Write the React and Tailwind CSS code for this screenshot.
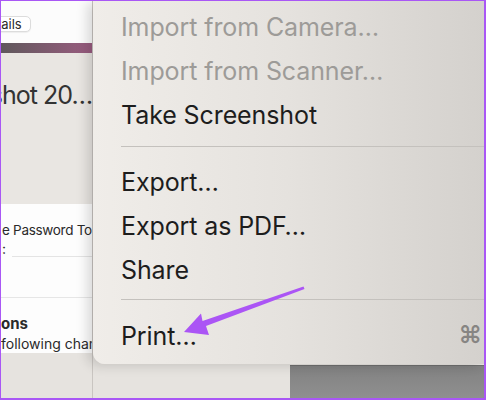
import React from 'react';

const font = { fontFamily: 'Inter, "Noto Sans", sans-serif' };

function Item({ label, disabled, shortcut }) {
  return (
    <div
      className={`flex items-center justify-between h-[44px] pl-[28px] pr-[2px] text-[25px] leading-[44px] whitespace-nowrap tracking-[-0.1px] ${
        disabled ? 'text-[#9d9b98]' : 'text-[#1d1d1d]'
      }`}
    >
      <span className="pt-[3px]">{label}</span>
      {shortcut && <span className="text-[#878583] text-[24px] font-semibold pt-[1px]">{shortcut}</span>}
    </div>
  );
}

function Separator({ top, bottom }) {
  return (
    <div className={`${top} ${bottom} pl-[28px]`}>
      <div className="h-px bg-[#c4c1bd]" />
    </div>
  );
}

function LeftWindow() {
  return (
    <div className="w-[92px] h-full flex flex-col shrink-0 overflow-hidden border-r border-[#c9c5c1] text-[#2a2a2a]">
      <div className="h-[42px] bg-[#fcfcfc] flex items-start pt-[15px]">
        <div className="ml-[-30px] h-[16px] px-[8px] flex items-center rounded-[5px] border border-[#dcdcdc] bg-white text-[13px] leading-none shadow-[0_1px_1px_rgba(0,0,0,0.06)]">
          Details
        </div>
      </div>
      <div className="h-[10px] bg-gradient-to-r from-[#5f585c] via-[#7d5a6e] to-[#9a5c80]" />
      <div className="h-[151px] bg-[#e9e6e2] flex justify-end pt-[22px] overflow-hidden">
        <span className="text-[25px] leading-[40px] whitespace-nowrap text-[#333] tracking-[-1px]">Screenshot 20…</span>
      </div>
      <div className="h-[149px] bg-[#fdfdfd] flex flex-col overflow-hidden">
        <div className="pt-[17px] h-[41px] text-[13.5px] leading-[18px] whitespace-nowrap pl-[1px] tracking-[-0.3px]">e Password To Open</div>
        <div className="h-[17px] text-[14px] leading-[14px] pl-[1px]">:</div>
        <div className="ml-[11px] h-px bg-[#e4e4e4]" />
        <div className="h-[46px]" />
        <div className="h-px bg-[#e6e6e6]" />
        <div className="pt-[17px] text-[15px] font-bold leading-[18px] whitespace-nowrap">ons</div>
        <div className="pt-[2px] text-[14px] leading-[18px] whitespace-nowrap">following changes</div>
      </div>
      <div className="flex-1 bg-[#e6e3df]" />
    </div>
  );
}

function Menu() {
  return (
    <div className="h-[363px] flex flex-col pt-[2px] rounded-bl-[12px] bg-gradient-to-r from-[#f0ede9] via-[#e5e2de] to-[#d4d1cd] shadow-[-6px_2px_12px_rgba(0,0,0,0.14)] relative z-10">
      <Item label="Import from Camera…" disabled />
      <Item label="Import from Scanner…" disabled />
      <Item label="Take Screenshot" />
      <Separator top="pt-[11px]" bottom="pb-[11px]" />
      <Item label="Export…" />
      <Item label="Export as PDF…" />
      <Item label="Share" />
      <Separator top="pt-[9px]" bottom="pb-[12px]" />
      <Item label="Print…" shortcut="⌘" />
    </div>
  );
}

function Arrow() {
  return (
    <svg className="absolute left-0 top-0 z-20 pointer-events-none" width="486" height="400" viewBox="0 0 486 400">
      <path
        d="M183 331 L200 312.5 L201.5 320 L302.5 285.5 L303.5 288 L205 325 L208 334 Z"
        fill="#ab55f5"
      />
    </svg>
  );
}

export default function App() {
  return (
    <div
      className="relative w-[486px] h-[400px] overflow-hidden border-t border-l border-r-2 border-b-2 border-[#a957f5] flex bg-[#e6e3df]"
      style={font}
    >
      <LeftWindow />
      <div className="flex-1 flex flex-col min-w-0">
        <Menu />
        <div className="flex-1 flex">
          <div className="w-[197px] bg-[#e6e3df]" />
          <div className="flex-1 mt-[1px] bg-gradient-to-b from-[#828282] to-[#8f8f8f] border-t border-[#6f6f6f]" />
        </div>
      </div>
      <Arrow />
    </div>
  );
}
